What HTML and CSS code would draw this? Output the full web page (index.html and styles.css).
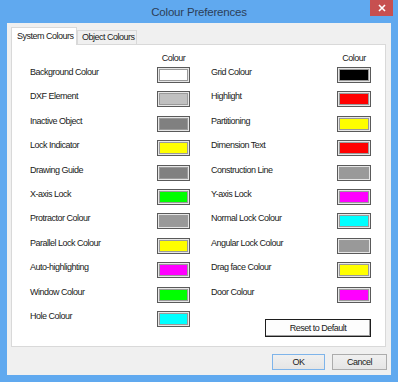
FILE: index.html
```html
<!DOCTYPE html>
<html lang="en">

<head>
    <meta charset="UTF-8">
    <title>Colour Preferences</title>
    <link rel="stylesheet" href="styles.css">
</head>

<body>
    <div class="window">
        <!-- title bar -->
        <div class="titlebar">
            <span class="title">Colour Preferences</span>
            <a href="javascript:;" class="close">
                <svg width="8" height="8" viewBox="0 0 8 8">
                    <path d="M1 1L7 7M7 1L1 7" stroke="#fff" stroke-width="1.6" />
                </svg>
            </a>
        </div>

        <div class="client">
            <!-- tabs -->
            <div class="tabs">
                <div class="tab active">System Colours</div>
                <div class="tab">Object Colours</div>
            </div>

            <div class="panel">
                <div class="head">
                    <span class="head-left">Colour</span>
                    <span class="head-right">Colour</span>
                </div>
                <div class="rows">
                    <span class="label">Background Colour</span>
                    <span class="swatch"><i class="white"></i></span>
                    <span class="label col2">Grid Colour</span>
                    <span class="swatch"><i class="black"></i></span>

                    <span class="label">DXF Element</span>
                    <span class="swatch"><i class="silver"></i></span>
                    <span class="label col2">Highlight</span>
                    <span class="swatch"><i class="red"></i></span>

                    <span class="label">Inactive Object</span>
                    <span class="swatch"><i class="grey"></i></span>
                    <span class="label col2">Partitioning</span>
                    <span class="swatch"><i class="yellow"></i></span>

                    <span class="label">Lock Indicator</span>
                    <span class="swatch"><i class="yellow"></i></span>
                    <span class="label col2">Dimension Text</span>
                    <span class="swatch"><i class="red"></i></span>

                    <span class="label">Drawing Guide</span>
                    <span class="swatch"><i class="grey"></i></span>
                    <span class="label col2">Construction Line</span>
                    <span class="swatch"><i class="mid"></i></span>

                    <span class="label">X-axis Lock</span>
                    <span class="swatch"><i class="green"></i></span>
                    <span class="label col2">Y-axis Lock</span>
                    <span class="swatch"><i class="magenta"></i></span>

                    <span class="label">Protractor Colour</span>
                    <span class="swatch"><i class="mid"></i></span>
                    <span class="label col2">Normal Lock Colour</span>
                    <span class="swatch"><i class="cyan"></i></span>

                    <span class="label">Parallel Lock Colour</span>
                    <span class="swatch"><i class="yellow"></i></span>
                    <span class="label col2">Angular Lock Colour</span>
                    <span class="swatch"><i class="mid"></i></span>

                    <span class="label">Auto-highlighting</span>
                    <span class="swatch"><i class="magenta"></i></span>
                    <span class="label col2">Drag face Colour</span>
                    <span class="swatch"><i class="yellow"></i></span>

                    <span class="label">Window Colour</span>
                    <span class="swatch"><i class="green"></i></span>
                    <span class="label col2">Door Colour</span>
                    <span class="swatch"><i class="magenta"></i></span>

                    <span class="label">Hole Colour</span>
                    <span class="swatch"><i class="cyan"></i></span>
                    <a href="javascript:;" class="reset">Reset to Default</a>
                </div>
            </div>

            <!-- dialog buttons -->
            <div class="buttons">
                <a href="javascript:;" class="btn default">OK</a>
                <a href="javascript:;" class="btn">Cancel</a>
            </div>
        </div>
    </div>
</body>

</html>
```

FILE: styles.css
```css
* {
    padding: 0;
    margin: 0;
    box-sizing: border-box;
}

a {
    text-decoration: none;
    color: inherit;
}

body {
    background-color: #60a9ef;
    font-family: "Liberation Sans", Arial, sans-serif;
    color: #1a1a1a;
}

.window {
    display: flex;
    flex-direction: column;
    width: 398px;
    height: 382px;
    padding: 0 7px 7px;
    background-color: #60a9ef;
}

.titlebar {
    position: relative;
    display: flex;
    justify-content: center;
    align-items: center;
    height: 23px;
    margin: 0 -7px;
}

.title {
    font-size: 11.5px;
    letter-spacing: -0.2px;
    color: #2c3e58;
}

.close {
    position: absolute;
    top: 0;
    right: 5px;
    display: flex;
    justify-content: center;
    align-items: center;
    width: 23px;
    height: 16px;
    background-color: #c75050;
}

.client {
    flex: 1;
    display: flex;
    flex-direction: column;
    padding: 4px 5px 0 4px;
    background-color: #f0f0f0;
    font-size: 9px;
    letter-spacing: -0.5px;
}

.tabs {
    display: flex;
    align-items: flex-end;
    height: 17px;
}

.tab {
    width: 60px;
    height: 14px;
    line-height: 13px;
    padding-left: 4px;
    border: 1px solid #d9d9d9;
    border-bottom: none;
    background-color: #f0f0f0;
}

.tab.active {
    position: relative;
    z-index: 1;
    width: 66px;
    height: 18px;
    line-height: 17px;
    padding-left: 5px;
    margin-bottom: -1px;
    background-color: #fff;
}

.panel {
    height: 303px;
    padding: 8px 0 0 18px;
    border: 1px solid #d9d9d9;
    background-color: #fff;
}

.head,
.rows {
    display: grid;
    grid-template-columns: 127px 33px 21px 126px 34px;
}

.head {
    height: 10px;
    line-height: 10px;
    margin-bottom: 4px;
}

.head-left {
    grid-column: 2;
    text-align: center;
}

.head-right {
    grid-column: 5;
    text-align: center;
}

.rows {
    grid-auto-rows: 16px;
    row-gap: 8.4px;
}

.label {
    line-height: 11px;
}

.col2 {
    grid-column: 4;
}

.swatch {
    display: block;
    padding: 1px;
    border: 1px solid #5a5a5a;
    background-color: #e6e6e6;
}

.swatch i {
    display: block;
    height: 100%;
    border: 1px solid #9a9a9a;
}

.white { background-color: #fff; }
.black { background-color: #000; }
.silver { background-color: #c0c0c0; }
.grey { background-color: #808080; }
.mid { background-color: #999; }
.red { background-color: #f00; }
.yellow { background-color: #ff0; }
.green { background-color: #0f0; }
.magenta { background-color: #f0f; }
.cyan { background-color: #0ff; }

.reset {
    grid-column: 4 / 6;
    justify-self: end;
    align-self: start;
    width: 106px;
    height: 18px;
    margin-top: 8px;
    line-height: 16px;
    text-align: center;
    border: 1px solid #1e1e1e;
    background-color: #fdfdfd;
    box-shadow: inset -1px -1px 0 #a0a0a0;
}

.buttons {
    display: flex;
    justify-content: flex-end;
    gap: 7px;
    margin: 7px -1px 0 0;
}

.btn {
    width: 55px;
    height: 16px;
    line-height: 14px;
    text-align: center;
    border: 1px solid #acacac;
    background: linear-gradient(#f0f0f0, #e5e5e5);
}

.btn.default {
    width: 53px;
    border-color: #7eb4ea;
}
```
